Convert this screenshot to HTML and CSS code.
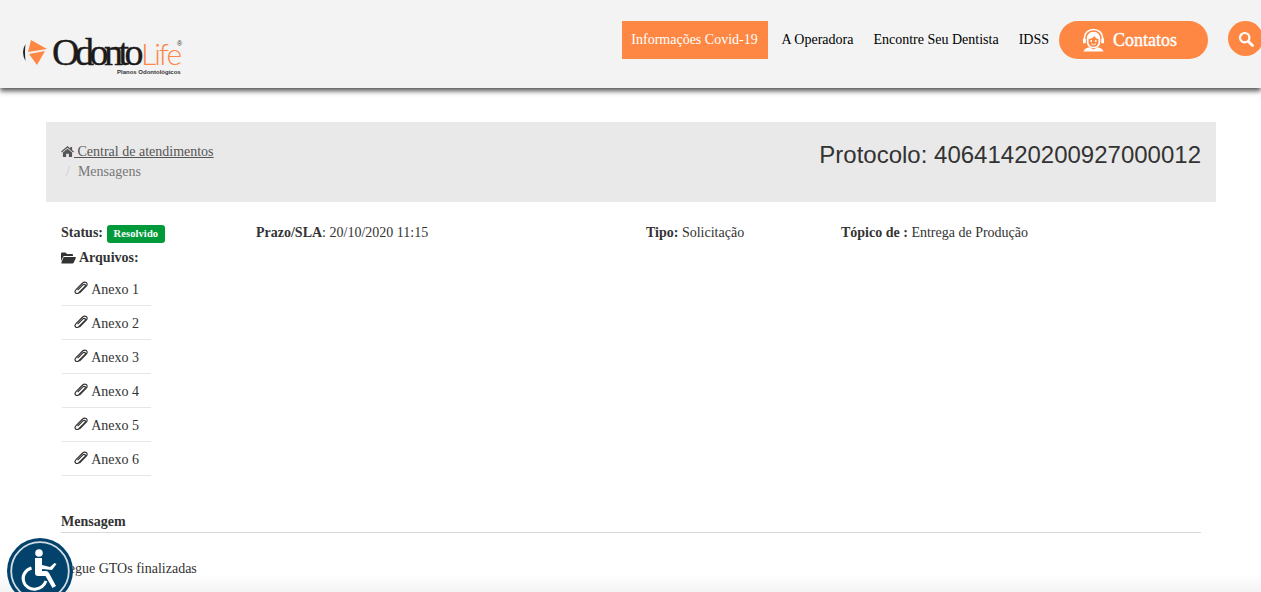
FILE: index.html
```html
<!DOCTYPE html>
<html lang="pt-BR">
<head>
<meta charset="utf-8">
<title>OdontoLife - Mensagens</title>
<link rel="stylesheet" href="styles.css">
</head>
<body>
<header class="site-header">
  <a class="logo" href="#">
    <svg class="logo-mark" viewBox="0 0 40 30" width="40" height="30" aria-hidden="true">
      <path d="M3.500 5 Q-1.500 13 3.500 22 Q2.500 13 3.500 5 Z" fill="#222"/>
      <path d="M9 1 L25 10 L6 13 Z" fill="#fd8743"/>
      <path d="M7 15 L23 12 L15 26 Z" fill="#fd8743"/>
    </svg>
    <span class="logo-text"><span class="logo-odonto">Odonto</span><span class="logo-life">Life</span></span>
    <span class="logo-reg">®</span>
    <span class="logo-sub">Planos Odontológicos</span>
  </a>
  <nav class="nav">
    <a class="nav-covid" href="#">Informações Covid-19</a>
    <a class="nav-link" href="#">A Operadora</a>
    <a class="nav-link" href="#">Encontre Seu Dentista</a>
    <a class="nav-link nav-idss" href="#">IDSS</a>
    <a class="nav-contact" href="#">
      <svg viewBox="0 0 24 24" width="23" height="24" aria-hidden="true">
        <path d="M2.500 13 V10 C2.500 4.500 6.500 1 12 1 S21.500 4.500 21.500 10 V13" fill="none" stroke="#fff" stroke-width="1.700"/>
        <path d="M12 3.500 C7.500 3.500 5 7 5 11 V14 C5 18 8 20.500 12 20.500 S19 18 19 14 V11 C19 7 16.500 3.500 12 3.500 Z" fill="#fff"/>
        <path d="M6.800 11 C9 11 11.500 9.800 13 7.800 C14 9.800 15.500 10.800 17.200 11 V14 C17.200 17 15 19 12 19 S6.800 17 6.800 14 Z" fill="#fd8743"/>
        <circle cx="9.600" cy="13" r="1" fill="#fff"/><circle cx="14.400" cy="13" r="1" fill="#fff"/>
        <path d="M9.500 16 Q12 17.800 14.500 16" stroke="#fff" stroke-width="1" fill="none"/>
        <rect x="1" y="10.500" width="3" height="5" rx="1" fill="#fff"/><rect x="20" y="10.500" width="3" height="5" rx="1" fill="#fff"/>
        <path d="M1.500 24 C2.500 21 5 20 8 19.500 L12 22 L16 19.500 C19 20 21.500 21 22.500 24 Z" fill="#fff"/>
      </svg>
      <span>Contatos</span>
    </a>
    <a class="nav-search" href="#" aria-label="Buscar">
      <svg viewBox="0 0 16 16" width="16" height="16" aria-hidden="true">
        <circle cx="6.700" cy="6.700" r="4.700" fill="none" stroke="#fff" stroke-width="2.200"/>
        <path d="M10.200 10.200 L14.500 14.500" stroke="#fff" stroke-width="2.800" stroke-linecap="round"/>
      </svg>
    </a>
  </nav>
</header>

<main class="container">
  <section class="crumb-bar">
    <div class="crumbs">
      <div class="crumb-row">
        <svg class="icon-home" viewBox="0 0 14 12" width="13" height="11" aria-hidden="true">
          <path d="M7 0 L10 2.600 V1 H12 V4.300 L14 6 L13.200 7 L7 1.800 L.8 7 L0 6 Z M7 3 L12 7.200 V12 H8.500 V8.500 H5.500 V12 H2 V7.200 Z" fill="#555"/>
        </svg><a class="crumb-link" href="#"> Central de atendimentos</a>
      </div>
      <div class="crumb-row crumb-current"><span class="crumb-sep">/</span>Mensagens</div>
    </div>
    <h1 class="protocol">Protocolo: 40641420200927000012</h1>
  </section>

  <section class="info">
    <div class="info-row">
      <div class="col-status"><b>Status:</b> <span class="badge">Resolvido</span></div>
      <div class="col-sla"><b>Prazo/SLA</b>: 20/10/2020 11:15</div>
      <div class="col-type"><b>Tipo:</b> Solicitação</div>
      <div class="col-topic"><b>Tópico de :</b> Entrega de Produção</div>
    </div>
    <div class="files-title">
      <svg viewBox="0 0 15 12" width="15" height="12" aria-hidden="true">
        <path d="M0 1.500 Q0 .5 1 .5 H4.500 L6 2 H11 Q12 2 12 3 V4 H3.500 Q2.500 4 2 5 L0 9 Z M3 5 H14.300 Q15.200 5 14.800 6 L12.700 10.800 Q12.300 11.500 11.500 11.500 H.8 Q0 11.500 .4 10.600 L2.300 5.700 Q2.500 5 3 5 Z" fill="#333"/>
      </svg>
      <b>Arquivos:</b>
    </div>
    <ul class="files">
      <li><svg class="clip" viewBox="0 0 16 14" aria-hidden="true"><path d="M6 12.500 L13.500 5 Q15.500 2.500 13.500 1 Q11.500 -.2 9.500 1.500 L2 9 Q.3 11 1.800 12.500 Q3.500 13.800 5.300 12.200 L12 5.500 Q13 4 12 3.200 Q11 2.500 9.800 3.500 L4 9.300" fill="none" stroke="#333" stroke-width="1.300"/></svg> Anexo 1</li>
      <li><svg class="clip" viewBox="0 0 16 14" aria-hidden="true"><path d="M6 12.500 L13.500 5 Q15.500 2.500 13.500 1 Q11.500 -.2 9.500 1.500 L2 9 Q.3 11 1.800 12.500 Q3.500 13.800 5.300 12.200 L12 5.500 Q13 4 12 3.200 Q11 2.500 9.800 3.500 L4 9.300" fill="none" stroke="#333" stroke-width="1.300"/></svg> Anexo 2</li>
      <li><svg class="clip" viewBox="0 0 16 14" aria-hidden="true"><path d="M6 12.500 L13.500 5 Q15.500 2.500 13.500 1 Q11.500 -.2 9.500 1.500 L2 9 Q.3 11 1.800 12.500 Q3.500 13.800 5.300 12.200 L12 5.500 Q13 4 12 3.200 Q11 2.500 9.800 3.500 L4 9.300" fill="none" stroke="#333" stroke-width="1.300"/></svg> Anexo 3</li>
      <li><svg class="clip" viewBox="0 0 16 14" aria-hidden="true"><path d="M6 12.500 L13.500 5 Q15.500 2.500 13.500 1 Q11.500 -.2 9.500 1.500 L2 9 Q.3 11 1.800 12.500 Q3.500 13.800 5.300 12.200 L12 5.500 Q13 4 12 3.200 Q11 2.500 9.800 3.500 L4 9.300" fill="none" stroke="#333" stroke-width="1.300"/></svg> Anexo 4</li>
      <li><svg class="clip" viewBox="0 0 16 14" aria-hidden="true"><path d="M6 12.500 L13.500 5 Q15.500 2.500 13.500 1 Q11.500 -.2 9.500 1.500 L2 9 Q.3 11 1.800 12.500 Q3.500 13.800 5.300 12.200 L12 5.500 Q13 4 12 3.200 Q11 2.500 9.800 3.500 L4 9.300" fill="none" stroke="#333" stroke-width="1.300"/></svg> Anexo 5</li>
      <li><svg class="clip" viewBox="0 0 16 14" aria-hidden="true"><path d="M6 12.500 L13.500 5 Q15.500 2.500 13.500 1 Q11.500 -.2 9.500 1.500 L2 9 Q.3 11 1.800 12.500 Q3.500 13.800 5.300 12.200 L12 5.500 Q13 4 12 3.200 Q11 2.500 9.800 3.500 L4 9.300" fill="none" stroke="#333" stroke-width="1.300"/></svg> Anexo 6</li>
    </ul>
    <div class="msg-title"><b>Mensagem</b></div>
    <p class="msg-body">Segue GTOs finalizadas</p>
  </section>
</main>

<div class="bottom-fade"></div>

<a class="a11y" href="#" aria-label="Acessibilidade">
  <svg viewBox="0 0 66 66" width="66" height="66" aria-hidden="true">
    <circle cx="33" cy="33" r="33" fill="#02426b"/>
    <circle cx="33" cy="33" r="28.800" fill="none" stroke="#d5dde3" stroke-width="1.800"/>
    <circle cx="32" cy="15" r="3.800" fill="#fff"/>
    <path d="M28 20 H35 V27 L43 29 L47.500 25 L49.500 26 L45 32 L35 31 V33 H39 Q41 33 42 35 L49 48 L45.500 50 L38.500 38 H31 Q28 38 28 35 Z" fill="#fff"/>
    <path d="M24.500 30 C18 32 15 38 16.500 43 C18 49 24 52 29 51 C33 50.500 37 48 39 43" fill="none" stroke="#fff" stroke-width="3"/>
  </svg>
</a>
</body>
</html>
```
FILE: styles.css
```css
* { box-sizing: border-box; }
html, body { margin: 0; padding: 0; height: 592px; overflow: hidden; }
body {
  font-family: "Liberation Serif", "Times New Roman", serif;
  font-size: 14px;
  line-height: 20px;
  color: #333;
  background: #fff;
}
a { color: inherit; text-decoration: none; }

.site-header {
  height: 88px;
  background: #f3f3f3;
  box-shadow: 0 3px 5px rgba(40, 40, 40, .8);
  display: flex;
  justify-content: space-between;
  position: relative;
}
.logo { position: relative; display: block; width: 170px; height: 88px; margin-left: 21px; }
.logo-mark { position: absolute; left: 1px; top: 39px; }
.logo-text {
  position: absolute; left: 31px; top: 37px;
  font-size: 38px; line-height: 30px; white-space: nowrap;
}
.logo-odonto { color: #1d1a1a; letter-spacing: -4.500px; -webkit-text-stroke: .4px #1d1a1a; }
.logo-life {
  color: #fd8743; font-family: Lato, "Liberation Sans", sans-serif; font-weight: 300;
  font-size: 30px; letter-spacing: -2px; margin-left: 2px;
}
.logo-reg {
  position: absolute; left: 156px; top: 40px;
  font-family: "Liberation Sans", Arial, sans-serif;
  font-size: 7px; line-height: 8px; color: #333;
}
.logo-sub {
  position: absolute; left: 96px; top: 68px;
  font-family: "Liberation Sans", Arial, sans-serif;
  font-size: 6px; line-height: 8px; color: #333; white-space: nowrap; font-weight: 700;
}

.nav { display: flex; align-items: flex-start; padding-top: 21px; padding-right: 0; }
.nav-covid {
  height: 38px; line-height: 38px; width: 146px; text-align: center;
  background: #fd8743; color: #fff; margin-right: 14px;
}
.nav-link { height: 38px; line-height: 38px; color: #000; margin-right: 20px; white-space: nowrap; }
.nav-idss { margin-right: 10px; }
.nav-contact {
  width: 149px; height: 38px; border-radius: 19px; background: #fd8743;
  color: #fff; display: flex; align-items: center; gap: 8px; padding-left: 23px;
  font-size: 18px; margin-right: 20px; -webkit-text-stroke: .4px #fff;
}
.nav-search {
  width: 35px; height: 35px; border-radius: 50%; background: #fd8743;
  display: flex; align-items: center; justify-content: center; margin-right: -2px;
}

.container { width: 1170px; margin: 34px 0 0 46px; }
.crumb-bar {
  height: 80px; background: #e9e9e9; padding: 20px 15px 0;
  display: flex; justify-content: space-between; align-items: flex-start;
}
.crumb-row { height: 20px; white-space: nowrap; }
.icon-home { vertical-align: -1px; }
.crumb-link { color: #555; text-decoration: underline; }
.crumb-current { color: #777; }
.crumb-sep { color: #ccc; margin: 0 8px 0 5px; }
.protocol {
  margin: -1px 0 0; font-family: "Liberation Sans", Arial, sans-serif;
  font-weight: 400; font-size: 24px; line-height: 28px; color: #333;
}

.info { padding: 21px 15px 0; }
.info-row { display: grid; grid-template-columns: 195px 390px 195px 1fr; height: 20px; }
.badge {
  display: inline-block; height: 18px; line-height: 18px; padding: 0 7px; margin-left: 0;
  background: #009a3a; color: #fff; font-size: 10.500px; font-weight: 700; border-radius: 3px;
  vertical-align: 0; letter-spacing: .1px;
}
.files-title { margin-top: 5px; height: 20px; display: flex; align-items: center; gap: 3px; }
.files-title svg { flex: none; }
.files { list-style: none; margin: 4px 0 0; padding: 0; }
.files li {
  width: 89px; height: 34px; margin-left: 1px; padding: 8px 0 0 12px;
  border-bottom: 1px solid #e6e6e6; white-space: nowrap;
}
.clip { width: 14.500px; height: 14px; vertical-align: -1px; }
.msg-title { margin-top: 36px; height: 21px; border-bottom: 1px solid #d8d8d8; line-height: 20px; }
.msg-body { margin: 26px 0 0; }

.bottom-fade {
  position: absolute; left: 0; right: 0; bottom: 0; height: 18px;
  background: linear-gradient(to bottom, rgba(240,240,240,0), rgba(240,240,240,.75));
}
.a11y { position: absolute; left: 7px; top: 538px; display: block; width: 66px; height: 66px; }
.a11y svg { display: block; }
```
